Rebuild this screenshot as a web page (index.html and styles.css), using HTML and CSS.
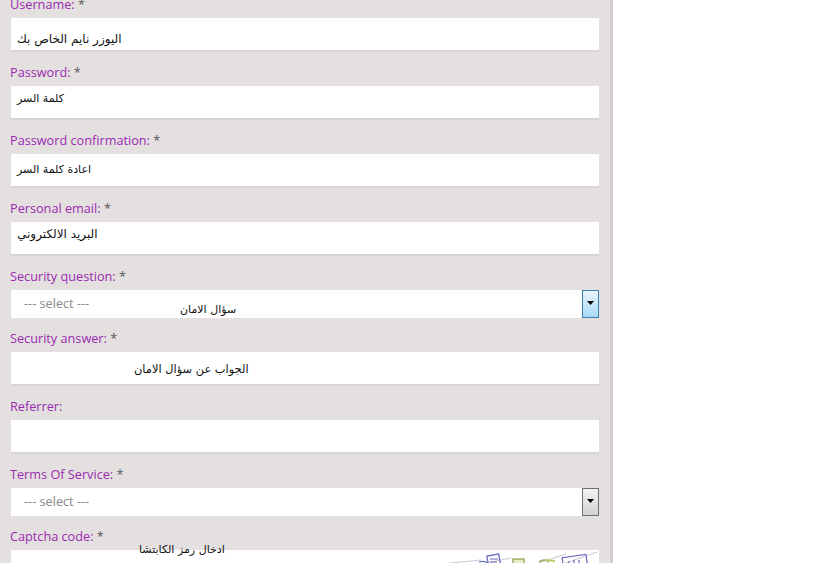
FILE: index.html
```html
<!DOCTYPE html>
<html lang="en">
<head>
<meta charset="utf-8">
<title>Register</title>
<link rel="stylesheet" href="styles.css">
</head>
<body>
<div class="panel">
  <form class="form">
    <div class="row">
      <div class="label">Username: <span class="req">*</span></div>
      <div class="input"><span class="val ar off21 wide">اليوزر نايم الخاص بك</span></div>
    </div>
    <div class="row">
      <div class="label">Password: <span class="req">*</span></div>
      <div class="input"><span class="val ar off13">كلمة السر</span></div>
    </div>
    <div class="row">
      <div class="label">Password confirmation: <span class="req">*</span></div>
      <div class="input"><span class="val ar off16">اعادة كلمة السر</span></div>
    </div>
    <div class="row">
      <div class="label">Personal email: <span class="req">*</span></div>
      <div class="input"><span class="val ar off12 wide">البريد الالكتروني</span></div>
    </div>
    <div class="row">
      <div class="label">Security question: <span class="req">*</span></div>
      <div class="select">
        <span class="placeholder">--- select ---</span>
        <span class="arrow arrow-hover"><svg width="7" height="4" viewBox="0 0 7 4"><path d="M0 0h7L3.5 4z" fill="#000"/></svg></span>
        <span class="note note-q">سؤال الامان</span>
      </div>
    </div>
    <div class="row">
      <div class="label">Security answer: <span class="req">*</span></div>
      <div class="input"><span class="val ar off17 ind-answer">الجواب عن سؤال الامان</span></div>
    </div>
    <div class="row">
      <div class="label">Referrer:</div>
      <div class="input"></div>
    </div>
    <div class="row">
      <div class="label">Terms Of Service: <span class="req">*</span></div>
      <div class="select">
        <span class="placeholder">--- select ---</span>
        <span class="arrow"><svg width="7" height="4" viewBox="0 0 7 4"><path d="M0 0h7L3.5 4z" fill="#000"/></svg></span>
      </div>
    </div>
    <div class="row captcha-row">
      <div class="label">Captcha code: <span class="req">*</span></div>
      <div class="input captcha">
        <svg class="captcha-img" width="156" height="20" viewBox="0 0 156 20">
          <path d="M0 14 L40 10 M30 16 L70 8 M95 14 L125 4 M110 18 L156 2" stroke="#b9b9c9" stroke-width="0.8" fill="none"/>
          <path d="M38 12 q6 -2 10 2" stroke="#6c6cc0" stroke-width="1.2" fill="none"/>
          <rect x="47" y="5" width="12" height="14" fill="none" stroke="#6b6bbd" stroke-width="1.3" transform="rotate(-10 53 12)"/>
          <path d="M49 9 h8 M49 12 h7" stroke="#6b6bbd" stroke-width="1.2"/>
          <rect x="72" y="9" width="11" height="12" fill="#e9edc4" stroke="#8f9a4a" stroke-width="1.2"/>
          <path d="M98 12 q5 -4 10 0" stroke="#9aa55a" stroke-width="1.3" fill="none"/>
          <path d="M104 10 l10 1" stroke="#c6c96a" stroke-width="2"/>
          <rect x="122" y="6" width="24" height="14" fill="none" stroke="#6b6bbd" stroke-width="1.2" transform="rotate(-8 134 13)"/>
          <path d="M128 11 v6 M133 10 v7 M138 10 v7" stroke="#6b6bbd" stroke-width="1.3"/>
        </svg>
      </div>
      <span class="note note-c">ادخال رمز الكابتشا</span>
    </div>
  </form>
</div>
</body>
</html>
```

FILE: styles.css
```css
html, body {
  margin: 0;
  padding: 0;
  background: #ffffff;
  height: 563px;
  overflow: hidden;
}

.panel {
  width: 588px;
  height: 563px;
  padding: 0 11px;
  background: #e4e0e0;
  border-right: 3px solid #d2cece;
  overflow: hidden;
}

.form {
  margin: -5px 0 0 0;
  display: flex;
  flex-direction: column;
  gap: 11px;
}

.row {
  position: relative;
  display: flex;
  flex-direction: column;
  gap: 5px;
}

.label {
  font-family: "Open Sans", "Liberation Sans", sans-serif;
  font-size: 12.7px;
  line-height: 18px;
  height: 18px;
  margin-left: -1px;
  color: #9b2ab0;
}

.req {
  color: #555555;
}

.input {
  position: relative;
  height: 32px;
  background: #ffffff;
  border-bottom: 2px solid #d9d5d5;
}

.val {
  display: block;
  padding-left: 6px;
  color: #000000;
}

.ar {
  font-family: "DejaVu Sans", "Liberation Sans", sans-serif;
  font-size: 11px;
  line-height: 14px;
  color: #111111;
}

.wide {
  font-size: 12px;
}

.off21 { padding-top: 14px; }
.off13 { padding-top: 6px; }
.off16 { padding-top: 9px; }
.off12 { padding-top: 5px; }
.off17 { padding-top: 10px; }
.ind-answer { padding-left: 123px; font-size: 11.4px; }

.select {
  position: relative;
  height: 28px;
  background: #ffffff;
  display: flex;
  align-items: center;
  justify-content: space-between;
}

.placeholder {
  font-family: "Open Sans", "Liberation Sans", sans-serif;
  font-size: 12.7px;
  color: #8a8a8a;
  padding-left: 13px;
  padding-bottom: 2px;
}

.arrow {
  width: 15px;
  height: 26px;
  border: 1px solid #707070;
  background: linear-gradient(#f3f3f3, #d2d2d2);
  display: flex;
  align-items: center;
  justify-content: center;
}

.arrow svg {
  margin-top: -2px;
}

.arrow-hover {
  border-color: #3c7fb1;
  background: linear-gradient(#e8f5fd, #a9d9f5);
}

.note {
  position: absolute;
  font-family: "DejaVu Sans", "Liberation Sans", sans-serif;
  font-size: 11px;
  line-height: 14px;
  color: #111111;
}

.note-q {
  left: 169px;
  top: 13px;
}

.note-c {
  left: 128px;
  top: 16px;
}

.captcha {
  display: flex;
  justify-content: flex-end;
  align-items: flex-start;
}

.captcha-img {
  display: block;
  margin-right: 2px;
}
```
